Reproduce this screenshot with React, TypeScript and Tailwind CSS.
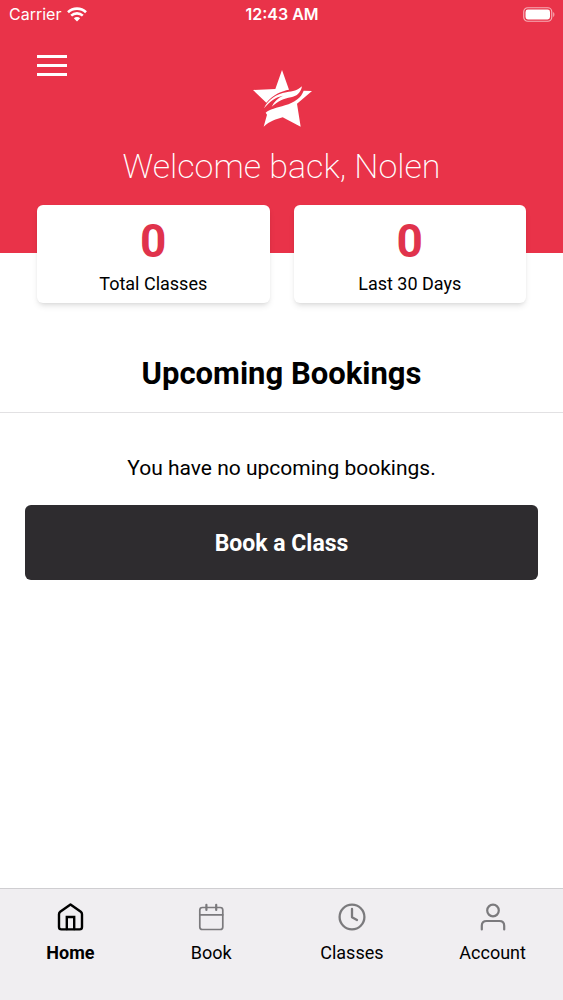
import type { ReactNode } from "react";

function StarLogo() {
  return (
    <svg viewBox="0 0 198 192" className="h-16 w-[66px]" fill="white" role="img" aria-label="Star logo">
      <path d="M12 72 L79 69 L99 12 L120 71 C98 75 74 84 52 110 Z" />
      <path d="M45 127 C56 102 82 84 112 79 C132 76 146 73 159 61 C155 82 142 91 126 94 C104 97 88 106 68 122 C76 106 88 95 102 89 C80 93 62 106 45 127 Z" />
      <path d="M164 74 L189 75 L144 113 L155 182 L101 154 C82 159 62 166 44 182 L54 146 L50 140 C60 130 84 126 108 118 C138 108 156 96 164 74 Z" />
    </svg>
  );
}

function WifiIcon() {
  return (
    <svg viewBox="0 0 20 15" className="h-[15px] w-5" fill="none" stroke="white" strokeWidth="2.6" aria-hidden="true">
      <path d="M1 5.2 C6 0.4 14 0.4 19 5.2" />
      <path d="M4.2 8.6 C7.5 5.6 12.5 5.6 15.8 8.6" />
      <path d="M10 14.5 L6.8 11.3 C8.6 9.7 11.4 9.7 13.2 11.3 Z" fill="white" stroke="none" />
    </svg>
  );
}

function BatteryIcon() {
  return (
    <svg viewBox="0 0 32 15" className="h-[15px] w-8" role="img" aria-label="Battery full">
      <rect x="0.75" y="0.75" width="28" height="13.5" rx="4" fill="none" stroke="white" strokeOpacity="0.6" strokeWidth="1.2" />
      <rect x="2.5" y="2.5" width="24.5" height="10" rx="2.4" fill="white" />
      <path d="M30.2 5 C31.8 5.8 31.8 9.2 30.2 10 Z" fill="white" fillOpacity="0.6" />
    </svg>
  );
}

function StatusBar() {
  return (
    <div className="grid grid-cols-3 items-center pt-1 pr-2 pl-[9px] font-['Inter',sans-serif] text-[16px] leading-5">
      <div className="flex items-center gap-[6px]">
        <span>Carrier</span>
        <WifiIcon />
      </div>
      <span className="text-center font-semibold">12:43 AM</span>
      <div className="flex justify-end">
        <BatteryIcon />
      </div>
    </div>
  );
}

function StatCard({ value, label }: { value: number; label: string }) {
  return (
    <div className="flex flex-1 flex-col items-center rounded-md bg-white pt-3 pb-[6px] shadow-md">
      <span className="text-[46px] leading-[48px] font-bold text-[#e0334c]">{value}</span>
      <span className="mt-[6px] text-lg leading-[26px]">{label}</span>
    </div>
  );
}

function TabIcon({ children, strokeWidth }: { children: ReactNode; strokeWidth: number }) {
  return (
    <svg
      viewBox="0 0 28 28"
      className="size-7"
      fill="none"
      stroke="currentColor"
      strokeWidth={strokeWidth}
      strokeLinecap="round"
      strokeLinejoin="round"
      aria-hidden="true"
    >
      {children}
    </svg>
  );
}

const tabs = [
  {
    label: "Home",
    active: true,
    strokeWidth: 2.4,
    icon: (
      <>
        <path d="M14.5 1.5 L4.2 8.8 Q3 9.7 3 11.2 V24 Q3 26.4 5.4 26.4 H23.6 Q26 26.4 26 24 V11.2 Q26 9.7 24.8 8.8 Z" />
        <path d="M10.8 26 V14 H18.2 V26" strokeLinejoin="miter" />
      </>
    ),
  },
  {
    label: "Book",
    active: false,
    strokeWidth: 1.7,
    icon: (
      <>
        <rect x="2.8" y="4.5" width="23" height="22" rx="2.6" />
        <path d="M2.8 11.8 H25.8" />
        <path d="M9.4 1.8 V7 M19.2 1.8 V7" strokeWidth="2.2" />
      </>
    ),
  },
  {
    label: "Classes",
    active: false,
    strokeWidth: 2.3,
    icon: (
      <>
        <circle cx="14" cy="14" r="12.4" />
        <path d="M14 6 V14.2 L19 17" />
      </>
    ),
  },
  {
    label: "Account",
    active: false,
    strokeWidth: 2.2,
    icon: (
      <>
        <circle cx="14" cy="7.5" r="5.8" />
        <path d="M2.8 26.4 V22.8 Q2.8 18 7.6 18 H20.4 Q25.2 18 25.2 22.8 V26.4" />
      </>
    ),
  },
];

function TabBar() {
  return (
    <nav className="grid h-28 grid-cols-4 border-t border-[#cfced1] bg-[#f0eef1]">
      {tabs.map((tab) => (
        <a
          key={tab.label}
          href={`#${tab.label.toLowerCase()}`}
          aria-current={tab.active ? "page" : undefined}
          className="flex flex-col items-center pt-[14px]"
        >
          <span className={tab.active ? "text-black" : "text-[#7b7a7d]"}>
            <TabIcon strokeWidth={tab.strokeWidth}>{tab.icon}</TabIcon>
          </span>
          <span className={tab.active ? "mt-[10px] text-lg leading-6 font-bold" : "mt-[10px] text-lg leading-6"}>
            {tab.label}
          </span>
        </a>
      ))}
    </nav>
  );
}

export default function App() {
  return (
    <div className="flex min-h-screen flex-col bg-white font-['Roboto',sans-serif] text-black">
      <header className="bg-[#e93349] pb-[66px] text-white">
        <StatusBar />
        <div className="grid grid-cols-3 items-start px-[37px] pt-[31px]">
          <button type="button" aria-label="Open menu" className="flex w-[30px] flex-col gap-[6px]">
            <span className="h-[3px] bg-white" />
            <span className="h-[3px] bg-white" />
            <span className="h-[3px] bg-white" />
          </button>
          <div className="flex justify-center pt-[11px]">
            <StarLogo />
          </div>
        </div>
        <h1 className="mt-[15px] text-center text-[34px] leading-[42px] font-extralight">Welcome back, Nolen</h1>
      </header>
      <main className="flex-1">
        <section aria-label="Class statistics" className="-mt-12 flex gap-6 px-[37px]">
          <StatCard value={0} label="Total Classes" />
          <StatCard value={0} label="Last 30 Days" />
        </section>
        <section>
          <h2 className="mt-[51px] border-b border-[#e2e1e3] pb-[18px] text-center text-[31px] leading-10 font-bold">
            Upcoming Bookings
          </h2>
          <div className="px-[25px] pt-[41px]">
            <p className="text-center text-[21px] leading-7">You have no upcoming bookings.</p>
            <button
              type="button"
              className="mt-[23px] h-[75px] w-full rounded-md bg-[#2e2c2f] pt-1 text-[23px] font-bold text-white"
            >
              Book a Class
            </button>
          </div>
        </section>
      </main>
      <TabBar />
    </div>
  );
}
